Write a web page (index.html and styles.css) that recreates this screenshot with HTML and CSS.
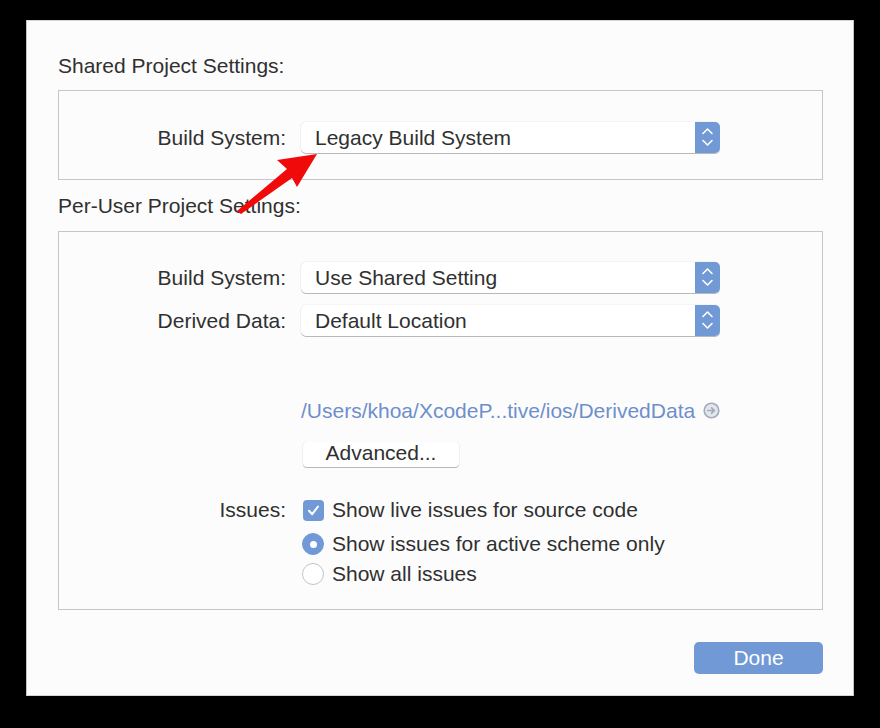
FILE: index.html
```html
<!DOCTYPE html>
<html>
<head>
<meta charset="utf-8">
<link rel="stylesheet" href="styles.css">
</head>
<body>
<div class="dialog">
  <div class="heading">Shared Project Settings:</div>
  <div class="box shared">
    <div class="row">
      <div class="label">Build System:</div>
      <div class="popup">
        <span class="popup-text">Legacy Build System</span>
        <span class="popup-arrows"><svg width="25" height="31" viewBox="0 0 25 31"><path d="M8 11.5 L12.5 7 L17 11.5 M8 18.5 L12.5 23 L17 18.5" fill="none" stroke="#fff" stroke-width="1.6" stroke-linecap="round" stroke-linejoin="round"/></svg></span>
      </div>
    </div>
  </div>

  <div class="heading second">Per-User Project Settings:</div>
  <div class="box peruser">
    <div class="row">
      <div class="label">Build System:</div>
      <div class="popup">
        <span class="popup-text">Use Shared Setting</span>
        <span class="popup-arrows"><svg width="25" height="31" viewBox="0 0 25 31"><path d="M8 11.5 L12.5 7 L17 11.5 M8 18.5 L12.5 23 L17 18.5" fill="none" stroke="#fff" stroke-width="1.6" stroke-linecap="round" stroke-linejoin="round"/></svg></span>
      </div>
    </div>
    <div class="row gap">
      <div class="label">Derived Data:</div>
      <div class="popup">
        <span class="popup-text">Default Location</span>
        <span class="popup-arrows"><svg width="25" height="31" viewBox="0 0 25 31"><path d="M8 11.5 L12.5 7 L17 11.5 M8 18.5 L12.5 23 L17 18.5" fill="none" stroke="#fff" stroke-width="1.6" stroke-linecap="round" stroke-linejoin="round"/></svg></span>
      </div>
    </div>
    <div class="row spacer">
      <div class="label"></div>
      <div class="empty-field"></div>
    </div>
    <div class="row">
      <div class="label"></div>
      <div class="path">
        <span class="path-text">/Users/khoa/XcodeP...tive/ios/DerivedData</span>
        <svg class="reveal" width="17" height="17" viewBox="0 0 17 17"><circle cx="8.5" cy="8.5" r="7.3" fill="#e3e6ec" stroke="#a3abba" stroke-width="1.6"/><path d="M4.8 8.5 H11.2 M8.6 5.8 L11.4 8.5 L8.6 11.2" fill="none" stroke="#a3abba" stroke-width="1.7" stroke-linecap="round" stroke-linejoin="round"/></svg>
      </div>
    </div>
    <div class="row btnrow">
      <div class="label"></div>
      <div class="button">Advanced...</div>
    </div>
    <div class="row issue first-issue">
      <div class="label">Issues:</div>
      <div class="option">
        <span class="checkbox"><svg width="21" height="21" viewBox="0 0 21 21"><path d="M6 10.8 L9.2 14.2 L15 6.5" fill="none" stroke="#fff" stroke-width="2" stroke-linecap="round" stroke-linejoin="round"/></svg></span>
        <span>Show live issues for source code</span>
      </div>
    </div>
    <div class="row issue">
      <div class="label"></div>
      <div class="option">
        <span class="radio on"><span class="dot"></span></span>
        <span>Show issues for active scheme only</span>
      </div>
    </div>
    <div class="row issue">
      <div class="label"></div>
      <div class="option">
        <span class="radio"></span>
        <span>Show all issues</span>
      </div>
    </div>
  </div>

  <div class="footer">
    <div class="done">Done</div>
  </div>
</div>

<svg class="arrow-overlay" width="880" height="728" viewBox="0 0 880 728">
  <polygon points="317,154 277,160 287,169 237,211 241,214 292,178 297,187" fill="#f00a0a"/>
</svg>
</body>
</html>
```

FILE: styles.css
```css
html, body {
  margin: 0;
  padding: 0;
  background: #000;
}

body {
  width: 880px;
  height: 728px;
  position: relative;
  overflow: hidden;
  font-family: "Liberation Sans", Arial, sans-serif;
  font-size: 21px;
  line-height: 24px;
  color: #303030;
}

.dialog {
  margin: 20px 0 0 26px;
  width: 765px;
  padding: 33px 30px 21px 31px;
  background: #fcfcfc;
  border: 1px solid #c2c2c2;
  border-top-color: #d6d6d6;
  border-bottom-color: #d6d6d6;
}

.heading {
  height: 24px;
  margin-bottom: 12px;
}

.heading.second {
  margin-top: 14px;
  margin-bottom: 13px;
}

.box {
  border: 1px solid #c6c6c6;
  background: #fcfcfc;
}

.shared {
  padding: 31px 0 26px;
}

.peruser {
  padding: 30px 0 20px;
}

.row {
  display: flex;
  align-items: center;
}

.row.gap {
  margin-top: 12px;
}

.label {
  width: 227px;
  margin-right: 15px;
  text-align: right;
  flex: none;
}

.popup {
  width: 419px;
  height: 31px;
  display: flex;
  align-items: stretch;
  background: #fff;
  border-radius: 5px;
  box-shadow: 0 1px 0 #b9b9b9, -0.5px 0 0 #e2e2e2, 0 -0.5px 0 #ececec;
}

.popup-text {
  flex: 1;
  display: flex;
  align-items: center;
  padding-left: 14px;
}

.popup-arrows {
  width: 25px;
  background: #7199d6;
  border-radius: 0 5px 5px 0;
  display: flex;
}

.spacer {
  height: 63px;
}

.empty-field {
  width: 419px;
  height: 30px;
}

.path {
  display: flex;
  align-items: center;
  height: 24px;
  color: #6e8fcb;
}

.reveal {
  margin-left: 8px;
  margin-top: -1px;
}

.btnrow {
  margin-top: 19px;
}

.button {
  margin-left: 2px;
  width: 156px;
  height: 25px;
  line-height: 22px;
  text-align: center;
  background: #fff;
  border-radius: 4px;
  box-shadow: 0 1px 0 #b9b9b9, -0.5px 0 0 #e2e2e2, 0.5px 0 0 #e2e2e2;
}

.issue {
  height: 30px;
}

.first-issue {
  margin-top: 28px;
  margin-bottom: 4px;
}

.option {
  display: flex;
  align-items: center;
  margin-left: 1px;
}

.checkbox {
  width: 21px;
  height: 21px;
  border-radius: 4px;
  background: #7199d6;
  margin-left: 1px;
  margin-right: 8px;
  display: flex;
}

.radio {
  width: 22px;
  height: 22px;
  border-radius: 50%;
  box-sizing: border-box;
  border: 1px solid #c4c4c4;
  background: #fff;
  margin-right: 8px;
  display: flex;
  align-items: center;
  justify-content: center;
}

.radio.on {
  background: #7199d6;
  border-color: #7199d6;
}

.dot {
  width: 7px;
  height: 7px;
  border-radius: 50%;
  background: #fff;
}

.footer {
  display: flex;
  justify-content: flex-end;
  margin-top: 32px;
}

.done {
  width: 129px;
  height: 32px;
  line-height: 31px;
  text-align: center;
  background: #7199d6;
  color: #fff;
  border-radius: 5px;
}

.arrow-overlay {
  position: absolute;
  top: 0;
  left: 0;
  pointer-events: none;
}
```
